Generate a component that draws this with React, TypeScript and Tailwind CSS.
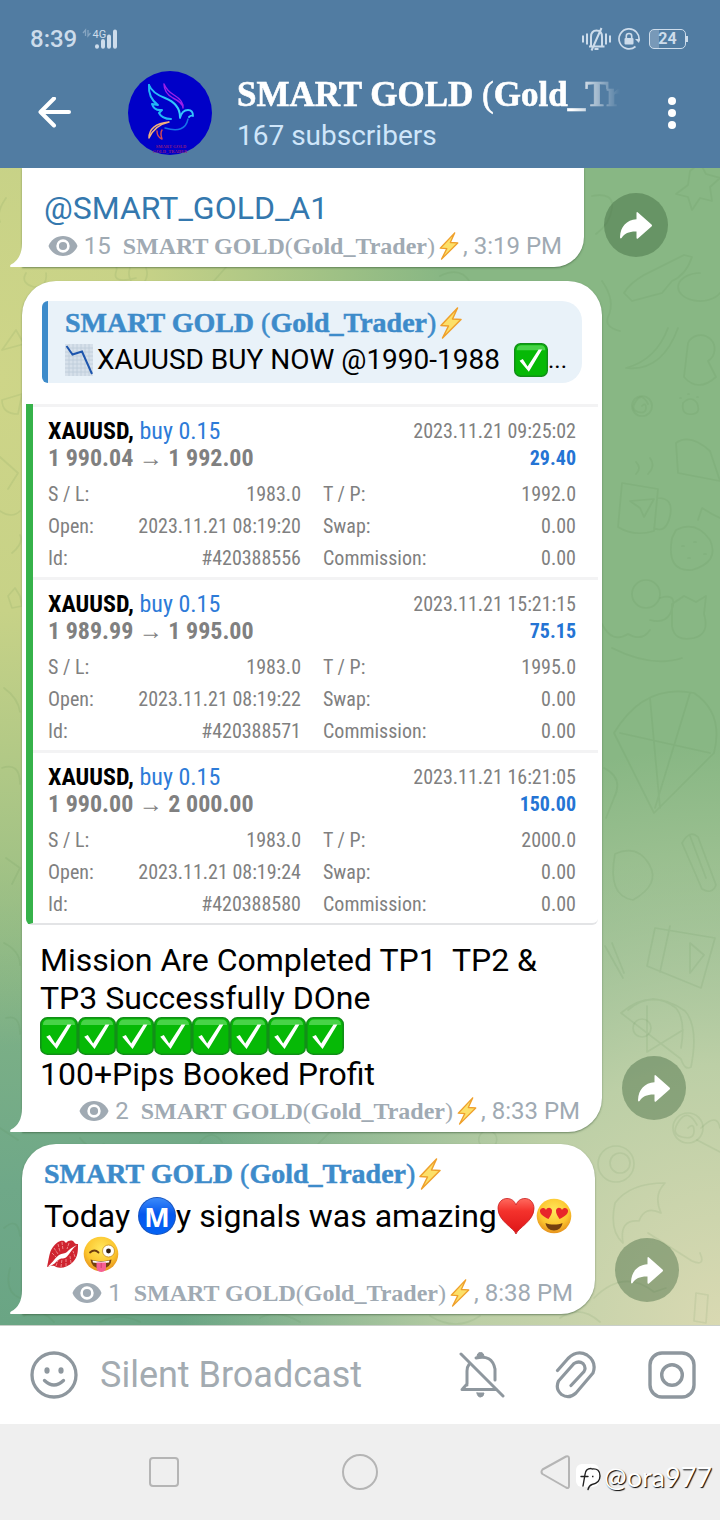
import React from "react";

const SERIF = "font-['Liberation_Serif',serif] font-bold";
const NARROW = "font-['Roboto_Condensed','Liberation_Sans_Narrow','Roboto',sans-serif]";

const trades = [
  { range: "1 990.04 → 1 992.00", closed: "2023.11.21 09:25:02", profit: "29.40", tp: "1992.0", open: "2023.11.21 08:19:20", id: "#420388556" },
  { range: "1 989.99 → 1 995.00", closed: "2023.11.21 15:21:15", profit: "75.15", tp: "1995.0", open: "2023.11.21 08:19:22", id: "#420388571" },
  { range: "1 990.00 → 2 000.00", closed: "2023.11.21 16:21:05", profit: "150.00", tp: "2000.0", open: "2023.11.21 08:19:24", id: "#420388580" },
];

function Bolt({ className }: { className: string }) {
  return (
    <svg viewBox="0 0 22 32" className={className} role="img" aria-label="lightning">
      <path d="M17.500 1 1 18.500l7.500.5L2.500 31 21 12.500l-8.500-.5z" fill="#fce069" stroke="#efa02c" strokeWidth="1.500" strokeLinejoin="round" />
    </svg>
  );
}

function Check({ className }: { className: string }) {
  return (
    <svg viewBox="0 0 38 38" className={className} role="img" aria-label="check mark">
      <rect x="0.8" y="0.8" width="36.4" height="36.4" rx="6.5" fill="#06b906" stroke="#128f18" strokeWidth="1.6" />
      <path d="M3 8q0-5.500 5.500-5.500h21q5.500 0 5.500 5.500z" fill="#5fdc5f" opacity=".75" />
      <path d="M6.200 19.800 9.800 18l5.400 8.400L27.500 7.400h3.900L16.600 32z" fill="#fff" />
    </svg>
  );
}

function Eye() {
  return (
    <svg viewBox="0 0 30 20" className="h-5 w-[30px] shrink-0" aria-hidden="true">
      <path d="M15 0C8.300 0 2.700 4 .5 10 2.700 16 8.300 20 15 20s12.300-4 14.500-10C27.300 4 21.700 0 15 0z" fill="#a0aab3" />
      <circle cx="15" cy="10" r="5.400" fill="none" stroke="#fff" strokeWidth="2.600" />
    </svg>
  );
}

function ChartDown() {
  return (
    <svg viewBox="0 0 28 32" className="h-8 w-7 shrink-0" role="img" aria-label="chart decreasing">
      <rect width="28" height="32" fill="#d6e0ea" />
      <path d="M4 0v32M8 0v32M12 0v32M16 0v32M20 0v32M24 0v32M0 4h28M0 8h28M0 12h28M0 16h28M0 20h28M0 24h28M0 28h28" stroke="#bccbd9" strokeWidth=".8" />
      <path d="M1.500 2 7.500 10.500 17 7.500 27 30" fill="none" stroke="#1d55ad" strokeWidth="2" />
    </svg>
  );
}

function MetroM() {
  return (
    <span className="relative inline-flex h-[38px] w-[38px] items-center justify-center rounded-full bg-[#0a62f0] bg-[linear-gradient(#3f8dfa,#0558ee_45%,#0463f4)] font-['Open_Sans',sans-serif] text-[27px] leading-none font-bold text-white align-middle ring-1 ring-[#1c55b8] ring-inset">
      M
    </span>
  );
}

function Heart() {
  return (
    <svg viewBox="0 0 38 38" className="inline-block h-[38px] w-[38px] align-middle" role="img" aria-label="red heart">
      <defs>
        <linearGradient id="heart" x1="0" y1="0" x2="0" y2="1">
          <stop offset="0" stopColor="#ff6a5e" />
          <stop offset=".35" stopColor="#f4322c" />
          <stop offset="1" stopColor="#dd1417" />
        </linearGradient>
      </defs>
      <path d="M19 37C17 31 1 24 1 11.500 1 5.500 5 1.500 10 1.500c4.500 0 7.500 2.500 9 6.500 1.500-4 4.500-6.500 9-6.500 5 0 9 4 9 10C37 24 21 31 19 37z" fill="url(#heart)" stroke="#c71a1c" strokeWidth=".8" />
    </svg>
  );
}

function FaceBase({ id }: { id: string }) {
  return (
    <>
      <defs>
        <radialGradient id={id} cx=".5" cy=".35" r=".65">
          <stop offset="0" stopColor="#ffe75c" />
          <stop offset=".65" stopColor="#fcc62f" />
          <stop offset="1" stopColor="#e6921d" />
        </radialGradient>
      </defs>
      <circle cx="19" cy="19" r="17.300" fill={`url(#${id})`} />
    </>
  );
}

function HeartEyes() {
  return (
    <svg viewBox="0 0 38 38" className="inline-block h-[38px] w-[38px] align-middle" role="img" aria-label="heart eyes">
      <FaceBase id="face-a" />
      <path d="M13.500 22C9 20 4.500 17 5 13.500c.5-3 4.500-3.500 6-.5 1-3 5.500-3 6 .5.300 3-2 6-3.500 8.500z" fill="#e8262a" />
      <path d="M24.500 22C29 20 33.500 17 33 13.500c-.5-3-4.500-3.500-6-.5-1-3-5.500-3-6 .5-.3 3 2 6 3.500 8.500z" fill="#e8262a" />
      <path d="M10.500 26c4.500 2 12.500 2 17 0-.5 4.500-4 7.500-8.500 7.500S11 30.500 10.500 26z" fill="#74400f" />
    </svg>
  );
}

function Wink() {
  return (
    <svg viewBox="0 0 38 38" className="inline-block h-[38px] w-[38px] align-middle" role="img" aria-label="winking face with tongue">
      <FaceBase id="face-b" />
      <path d="M8 17.500q4.500-4 8.500 0" fill="none" stroke="#6d3d10" strokeWidth="1.800" strokeLinecap="round" />
      <circle cx="26.500" cy="16" r="6" fill="#fff" stroke="#c48a20" strokeWidth=".8" />
      <circle cx="26.500" cy="16" r="2.400" fill="#33200e" />
      <path d="M8.500 24.500q10.500 3.500 21 0-.5 9-10.500 9.300Q9.500 33.500 8.500 24.500z" fill="#74400f" />
      <path d="M10.500 25.500q8.500 2.300 17 0l-.5 2q-8 1.500-16 0z" fill="#fff" />
      <path d="M14.500 27.500h9.500v5c0 6-9.500 6-9.500 0z" fill="#f65f93" />
      <path d="M19.200 28v5" stroke="#d33f72" strokeWidth="1" />
    </svg>
  );
}

function Kiss() {
  return (
    <svg viewBox="0 0 38 38" className="inline-block h-[38px] w-[38px] align-middle" role="img" aria-label="kiss mark">
      <path d="M3 32C5 24 5 17 9 12c3-4 7-7 11-6l2 2c3-3 6-3 8-1 1 2 2 2 4 2 0 7 0 13-5 18-5 5-12 7-17 5-3-2-5-1-9 0z" fill="#cf2430" />
      <path d="M4 31.500c6-1 8-5 11-7s5 0 8-3 5-8 10-11.500c-5 2-8 5-10 7s-5 1-8 3-6 7-11 11.500z" fill="#fff" />
      <path d="M10 13l4 6M14 9l2 8M18 7l1 8M25 8l-2 6M12 31l2-6M17 32l1-8M22 31l0-8M27 28l-1-7M31 22l-2-6M8 18l4 4" stroke="#f3a2a2" strokeWidth=".8" strokeDasharray="3 1" />
    </svg>
  );
}

function Meta({ views, time }: { views: string; time: string }) {
  return (
    <div className="flex h-7 items-center justify-end pr-[22px] text-2xl leading-7 whitespace-pre text-[#a0aab3]">
      <Eye />
      <span className="ml-1.5">{views}</span>
      <span className={`${SERIF} ml-3 text-2xl leading-7`}>
        SMART GOLD<span className="font-normal">(</span>Gold_Trader<span className="font-normal">)</span>
      </span>
      <Bolt className="ml-1 h-7 w-5" />
      <span className="ml-1">, {time}</span>
    </div>
  );
}

function Author() {
  return (
    <div className={`${SERIF} flex items-center text-[28px] leading-8 whitespace-nowrap text-[#3d8bca] [-webkit-text-stroke:0.5px]`}>
      <span>
        SMART GOLD <span className="font-normal">(</span>Gold_Trader<span className="font-normal">)</span>
      </span>
      <Bolt className="ml-1 h-8 w-[22px]" />
    </div>
  );
}

function Message({ className, children, shareClass }: { className: string; children: React.ReactNode; shareClass: string }) {
  return (
    <div className="flex items-end pl-[22px]">
      <article className={`relative bg-white shadow-[0_1px_2px_rgba(50,80,50,0.55)] ${className}`}>
        {children}
        <svg viewBox="0 0 14 34" className="absolute bottom-0 -left-3 h-[34px] w-3.5" aria-hidden="true">
          <path d="M14 34H.5Q-.5 32.500 1 31.500 12 26 12 10V0h2z" fill="#fff" />
        </svg>
      </article>
      <button aria-label="Share" className={`ml-5 flex size-16 shrink-0 items-center justify-center rounded-full bg-[#38603866] ${shareClass}`}>
        <svg viewBox="0 0 32 27" className="h-[27px] w-8" aria-hidden="true">
          <path d="M16.500 1.200Q16.500-.8 18.200.7L31.500 12.500q1 1 0 2L18.200 26.200Q16.500 27.500 16.500 25.500V19.500C9 19.300 4.500 21.500 1.800 25.700.8 27 0 26.500 0 25 .5 14.500 6.500 8 16.500 7.300z" fill="#fff" />
        </svg>
      </button>
    </div>
  );
}

function Trade({ t }: { t: (typeof trades)[number] }) {
  return (
    <section className={`${NARROW} h-[173px] border-t-[3px] border-[#f3f3f4] pt-2.5 pr-[22px] pl-[15px] text-xl text-[#808080]`}>
      <div className="flex items-center justify-between leading-7">
        <h3 className="text-2xl leading-7 font-bold text-black">
          XAUUSD, <span className="font-normal text-[#2d7bd8]">buy 0.15</span>
        </h3>
        <time>{t.closed}</time>
      </div>
      <div className="flex items-center justify-between leading-[26px] font-bold">
        <span className="text-2xl leading-[26px] text-[#808080]">{t.range}</span>
        <span className="text-[#2474d4]">{t.profit}</span>
      </div>
      <table className="mt-[7px] w-full table-fixed">
        <tbody>
          {[
            ["S / L:", "1983.0", "T / P:", t.tp],
            ["Open:", t.open, "Swap:", "0.00"],
            ["Id:", t.id, "Commission:", "0.00"],
          ].map((r) => (
            <tr key={r[0]} className="h-8 leading-8">
              <th className="w-[80px] p-0 text-left font-normal">{r[0]}</th>
              <td className="w-[173px] p-0 text-right">{r[1]}</td>
              <th className="w-[142px] p-0 pl-[22px] text-left font-normal">{r[2]}</th>
              <td className="p-0 text-right">{r[3]}</td>
            </tr>
          ))}
        </tbody>
      </table>
    </section>
  );
}

function Doodles() {
  return (
    <svg viewBox="0 0 720 1157" preserveAspectRatio="xMidYMin slice" className="absolute inset-0 h-full w-full" fill="none" stroke="#4d7b48" strokeOpacity=".1" strokeWidth="1.700" strokeLinecap="round" strokeLinejoin="round" aria-hidden="true">
      <path d="M690 3l10-8 6 11 14 4-10 9 2 14-12-3-8 12-4-13-12-3 12-9zM592 28q22-4 20 12t-16 26M624 125q6-10 20-18l40-20 8 2q-6 18-20 24l-10 12-30 8zM700 105a22 14 0 1 0 20 20" />
      <path d="M602 113q14 20 6 36-4 10 12 14M626 200q30-8 42-40M626 200q36 4 52-40M688 175a14 14 0 1 1 20 18l8 16q-18 16-32 0z" />
      <path d="M622 315l36 6-4 42q-20 6-36-4zM658 330q16 0 12 18t-16 12M630 333l24-2-10 18-4-9zM636 306q6-6 0-12M648 306q8-8 2-16M676 275q14-10 34 8l10 30-42-8z" />
      <path d="M676 362q20-10 34 10 10 22-18 30-26 2-20-32zM698 352l4-12 10 6 8 4M682 378h2M694 374h2M704 386h2M688 390h2" />
      <circle cx="646" cy="426" r="14" />
      <circle cx="642" cy="238" r="10" />
      <path d="M642 238q4-4 4 2t-8 4-2-11 12 3M683 235q8-8 14 0 4 10-4 11-12 2-10-11zM680 230h1M688 226h1M697 229h1" />
      <path d="M660 430q20-6 10 16-6 10-20 6M672 436l12-8 12 6 10-6-2 18q6 20-10 24-20 4-22-12zM602 456q10 20 26 10 14 8 22-4M612 480q40 20 70 10" />
      <path d="M614 565q30-50 80-40 30 20 20 60l-60 60zM620 565l90 20M650 530l10 110M690 525l-35 115M604 600q20 10 10 30l-8 20" />
      <path d="M690 668l16 42M682 675l20 46q10 6 14-4l-18-48q-8-8-16 6M615 686q22-10 34 10t-16 36q-26-4-18-46" />
      <path d="M655 760l60 10-14 50-54-22zM670 758l-10 46M690 775l14 12-14 18zM605 778l18 32M612 775l12 30M701 960q16-16 19 0" />
      <path d="M621 845q30-26 64-2 14 16 6 56-6 4-10-8zM628 842q24-20 48-2 10 12 5 40M647 838v46l36-22" />
      <circle cx="642" cy="860" r="9" />
      <circle cx="616" cy="996" r="18" />
      <circle cx="620" cy="995" r="10" />
      <circle cx="688" cy="960" r="15" />
      <path d="M688 960q6-6 6 3t-12 6-3-16 18 4M697 972l23 12M615 1035q15-20 50-20-12 12-4 30-16-8-22 8-20-2-16 22-14-12-8-40zM648 1065l44 28q14 6 8-8M594 1130q30-30 60-6l12-4M696 1125l12 2-2 28-12-2z" />
      <path d="M6 30q-10 14-6 24M26 105q-6 10 8 14 14 0 12-14M100 98q20-6 16 6t20 6M130 100a9 12 0 1 0 16 0M212 115l16-18M440 108q20-10 30 6M2 182l14-20 8 14zM2 232l20-6-4 20q-16 0-16-14M0 289l18 16-10 16M0 343q12 8 20 0M12 385q12-10 8-18M8 428l7-8 5 8 2 10-10 2zM4 520q14 10 16 24M2 600q18-6 18 16M6 690l14 10-8 16M4 775q16 8 16 22M6 850q14-4 14 16M0 960l18 12M4 1060q14-12 16 8M10 1100q-6 24 10 30M80 970q10 14 24 6M200 974q12-14 22 0M330 964q-10 10-14 14M480 976a9 9 0 1 1 14 2" />
      <path d="M24 1148q16-10 30 6M100 1154q20-10 40 0M260 1150q16-10 40 4M430 1148q26 16 50 0M560 1150q20-14 40 4" />
    </svg>
  );
}

function Dove() {
  return (
    <svg viewBox="0 0 84 84" className="size-[84px]" role="img" aria-label="SMART GOLD logo">
      <defs>
        <linearGradient id="wing" x1="0" y1="0" x2="1" y2="1">
          <stop offset="0" stopColor="#21b4f5" />
          <stop offset="1" stopColor="#3ad0ff" />
        </linearGradient>
      </defs>
      <circle cx="42" cy="42" r="42" fill="#0000c8" />
      <g fill="none" strokeLinecap="round" strokeLinejoin="round">
        <path d="M21 14q-1 13 9 20l-6-1q2 7 10 6l-3 3q3 6 12 6" stroke="#22b8f6" strokeWidth="2" />
        <path d="M21 14q3 8 16 13 15 6 15 19" stroke="url(#wing)" strokeWidth="2" />
        <path d="M36 13q0 9 9 14 10 5 10 10M36 13q3 7 10 11 10 6 9 13" stroke="#9b1fe8" strokeWidth="1.400" />
        <path d="M52 47q2-8 8-8 5 0 5 6-2-1-4 1" stroke="#35c5fb" strokeWidth="1.800" />
        <path d="M37 57q20 6 23-9" stroke="#1672e8" strokeWidth="1.500" />
        <path d="M21 67q0-14 20-16-14 3-20 16" stroke="#f3b07a" strokeWidth="1.500" />
        <path d="M29 60q0 6 5 8-2-6 0-9" stroke="#d54a54" strokeWidth="1.400" />
      </g>
      <text x="43" y="77" textAnchor="middle" fontSize="4.500" fontWeight="700" fontFamily="Liberation Serif, serif" fill="#8b1c80">SMART GOLD</text>
      <text x="42" y="82" textAnchor="middle" fontSize="4.500" fontWeight="700" fontFamily="Liberation Serif, serif" fill="#8b1c80">GOLD_TRADER</text>
    </svg>
  );
}

export default function App() {
  return (
    <div className="flex min-h-screen flex-col bg-white font-['Roboto',sans-serif] text-black">
      <header className="flex h-[168px] flex-col bg-[#517ca2]">
        <div className="flex h-[70px] items-center justify-between pt-[7px] pr-[34px] pl-[30px] text-[#cddceb]">
          <div className="flex items-center">
            <span className="text-2xl leading-7 font-medium">8:39</span>
            <svg viewBox="0 0 36 22" className="ml-1 h-[22px] w-9" role="img" aria-label="4G signal">
              <path d="M2 5l2.500-3v6M7 2v6l2.500-3" stroke="#86a5c1" strokeWidth="1.300" fill="none" />
              <text x="11.500" y="9.500" fontSize="11" fontFamily="Roboto, sans-serif" fill="currentColor">4G</text>
              <path d="M16 18.200v.5M22 13v5.700M28 8.500v10.200M34 3.500v15.200" stroke="currentColor" strokeWidth="4" strokeLinecap="round" />
            </svg>
          </div>
          <div className="flex items-center">
            <svg viewBox="0 0 29 24" className="h-6 w-[29px]" fill="none" stroke="currentColor" strokeWidth="2" aria-label="Silent">
              <path d="M1 8.500v7M5 6.500v11M28 8.500v7M24 6.500v11M7 19.500h15.500M9 19V10q0-6.500 5.500-6.500T20 10v9M12.500 22h4M9.500 23.500L19.500 1" />
            </svg>
            <svg viewBox="0 0 22 22" className="ml-[7px] size-[22px]" aria-label="Rotation locked">
              <path d="M17.500 18.500A10 10 0 1 1 20.800 13" fill="none" stroke="currentColor" strokeWidth="1.700" />
              <path d="M17 11h5l-1 4z" fill="currentColor" />
              <rect x="6.500" y="10" width="9" height="6.500" rx="1" fill="currentColor" />
              <path d="M8.300 10V8q0-2.500 2.700-2.500T13.700 8v2" fill="none" stroke="currentColor" strokeWidth="1.600" />
            </svg>
            <div className="relative ml-[9px] flex h-5 w-[37px] items-center justify-center rounded-[5px] border border-current bg-[linear-gradient(90deg,#7899b8_9px,transparent_9px)] text-base font-bold">
              24
              <span className="absolute top-1.5 -right-[3px] h-1.5 w-[2px] bg-[#cddceb]" />
            </div>
          </div>
        </div>
        <div className="flex h-[86px] items-center pr-7 pl-9 text-white">
          <button aria-label="Back">
            <svg viewBox="0 0 36 32" className="h-8 w-9" fill="none" stroke="currentColor" strokeWidth="4" strokeLinecap="round" strokeLinejoin="round">
              <path d="M33 15H5M18 1.500L4.500 15 18 28.500" />
            </svg>
          </button>
          <div className="ml-14 shrink-0">
            <Dove />
          </div>
          <div className="ml-[25px] min-w-0 flex-1 pt-[3px]">
            <h1 className={`${SERIF} overflow-hidden text-[35px] leading-[42px] whitespace-nowrap [-webkit-text-stroke:0.6px] [mask-image:linear-gradient(90deg,#000_calc(100%-48px),transparent)]`}>
              SMART GOLD <span className="font-normal">(</span>Gold_Trader)
            </h1>
            <p className="text-[28px] leading-10 text-[#cfe6fa]">167 subscribers</p>
          </div>
          <button aria-label="More options" className="ml-8 flex w-10 flex-col items-center gap-1">
            <span className="size-2 rounded-full bg-white" />
            <span className="size-2 rounded-full bg-white" />
            <span className="size-2 rounded-full bg-white" />
          </button>
        </div>
      </header>

      <main className="relative flex-1 overflow-hidden bg-[#88b784] bg-[radial-gradient(ellipse_62%_58%_at_0%_18%,#ced588_0%,#c7d287_35%,transparent_100%),radial-gradient(ellipse_75%_50%_at_100%_100%,#d9d9b2_0%,#bccfa6_45%,transparent_100%),linear-gradient(#88b784_0%,#88b784_60%,#6fa888_88%,#6aa584_100%)]">
        <Doodles />
        <div className="relative flex flex-col pb-[11px]">
          <Message className="w-[562px] rounded-br-[30px]" shareClass="mb-2.5">
            <div className="pt-[18px] pb-0.5 pl-[22px]">
              <a href="#channel" className="block text-[32px] leading-[44px] text-[#3478ae]">@SMART_GOLD_A1</a>
            </div>
            <div className="pb-[7px]">
              <Meta views="15" time="3:19 PM" />
            </div>
          </Message>

          <div className="mt-3.5">
            <Message className="w-[580px] rounded-t-[34px] rounded-br-[34px]" shareClass="mb-3">
              <div className="px-5 pt-5">
                <blockquote className="overflow-hidden rounded-l-[6px] rounded-r-[20px] border-l-[6px] border-[#3d8bca] bg-[#e9f2f9] pt-1.5 pb-1 pl-[17px]">
                  <Author />
                  <div className="flex h-10 items-center pt-0.5 text-[28px] leading-8 whitespace-pre">
                    <ChartDown />
                    <span className="ml-1">XAUUSD BUY NOW @1990-1988</span>
                    <Check className="ml-3.5 size-[34px]" />
                    <span className="text-2xl">...</span>
                  </div>
                </blockquote>
              </div>
              <div className="mx-1 mt-[21px] overflow-hidden rounded-b-[6px] border-b-2 border-l-[7px] border-b-[#e3e4e6] border-l-[#36b24a]">
                {trades.map((t) => (
                  <Trade key={t.id} t={t} />
                ))}
              </div>
              <div className="mt-4 pr-4 pl-[18px] text-[32px] leading-[38px]">
                <p className="whitespace-pre">{"Mission Are Completed TP1  TP2 &"}</p>
                <p>TP3 Successfully DOne</p>
                <div className="flex">
                  {Array.from({ length: 8 }, (_, i) => (
                    <Check key={i} className="size-[38px]" />
                  ))}
                </div>
                <p>100+Pips Booked Profit</p>
              </div>
              <div className="pt-1 pb-[7px]">
                <Meta views="2" time="8:33 PM" />
              </div>
            </Message>
          </div>

          <div className="mt-3">
            <Message className="w-[573px] rounded-t-[34px] rounded-br-[34px]" shareClass="mb-3">
              <div className="pt-3.5 pl-[22px]">
                <Author />
                <p className="mt-[7px] flex h-[38px] items-center text-[32px] leading-[38px] whitespace-pre">
                  {"Today "}
                  <MetroM />
                  {"y signals was amazing"}
                  <Heart />
                  <HeartEyes />
                </p>
                <p className="flex h-[38px] items-center">
                  <Kiss />
                  <Wink />
                </p>
              </div>
              <div className="pt-1.5 pb-[7px]">
                <Meta views="1" time="8:38 PM" />
              </div>
            </Message>
          </div>
        </div>
      </main>

      <form className="flex h-[99px] items-center border-t border-[#c9cfc9] bg-white pr-6 pl-[30px] text-[#8e979e]" onSubmit={(e) => e.preventDefault()}>
        <button type="button" aria-label="Emoji" className="shrink-0">
          <svg viewBox="0 0 48 48" className="size-12" fill="none" stroke="currentColor" strokeWidth="3.300" strokeLinecap="round">
            <circle cx="24" cy="24" r="22" />
            <path d="M14.500 29.500q9.500 9 19 0" />
            <ellipse cx="17" cy="19.500" rx="2.600" ry="3.200" fill="currentColor" stroke="none" />
            <ellipse cx="31" cy="19.500" rx="2.600" ry="3.200" fill="currentColor" stroke="none" />
          </svg>
        </button>
        <input aria-label="Silent Broadcast" placeholder="Silent Broadcast" className="ml-[22px] min-w-0 flex-1 text-[36px] leading-10 outline-none placeholder:text-[#a3abb1]" />
        <button type="button" aria-label="Mute notifications" className="ml-4 shrink-0">
          <svg viewBox="0 0 46 48" className="h-12 w-[46px]" fill="none" stroke="currentColor" strokeWidth="3" strokeLinecap="round">
            <path d="M2 3L44 45" />
            <path d="M3 38.500h34M8 34V20q0-4 2-6.500M17 7q16-4 19 11v11M8 33l-4.500 5" />
            <path d="M18 6q0-4.500 3.500-4.500T25 6M18 42h7q-.5 4-3.500 4T18 42z" fill="currentColor" strokeWidth="1" />
          </svg>
        </button>
        <button type="button" aria-label="Attach" className="ml-[50px] shrink-0">
          <svg viewBox="0 0 42 48" className="h-12 w-[42px]" fill="none" stroke="currentColor" strokeWidth="3.200" strokeLinecap="round">
            <path d="M2.500 19.500L13 7.500q9-9 19-3.500 10 7 6 18L21 42q-7 6.500-14.500 1.500Q0 38 3.500 30L19 12.500q5-3 9 0 3.500 4 1 8L16 34.500" />
          </svg>
        </button>
        <button type="button" aria-label="Record video" className="ml-[51px] shrink-0">
          <svg viewBox="0 0 48 48" className="size-12" fill="none" stroke="currentColor" strokeWidth="3.400">
            <rect x="2" y="2" width="44" height="44" rx="12" />
            <circle cx="24" cy="24" r="10.300" />
          </svg>
        </button>
      </form>

      <nav className="relative flex h-24 items-center justify-between bg-[#efefef] px-[148px] text-[#b5b5b5]">
        <button aria-label="Recent apps">
          <svg viewBox="0 0 32 32" className="size-8" fill="none" stroke="currentColor" strokeWidth="2">
            <rect x="2" y="2" width="28" height="28" rx="3" />
          </svg>
        </button>
        <button aria-label="Home">
          <svg viewBox="0 0 38 38" className="size-[38px]" fill="none" stroke="currentColor" strokeWidth="2">
            <circle cx="19" cy="19" r="17" />
          </svg>
        </button>
        <button aria-label="Back">
          <svg viewBox="0 0 32 36" className="h-9 w-8" fill="none" stroke="currentColor" strokeWidth="2" strokeLinejoin="round">
            <path d="M2.500 15.500Q.5 18 2.500 20L26 33.500q3 1.500 3-1.500V4.500q0-3-3-2z" />
          </svg>
        </button>
        <div className="absolute top-[37px] right-2 flex items-center text-white">
          <svg viewBox="0 0 28 30" className="h-[30px] w-7" aria-hidden="true">
            <rect x="0" y="2" width="23" height="23" rx="6" fill="#fff" />
            <path d="M15 6.500q-5.500 0-6 6L7 24M5 14.500h7M16 7q8-1 8 7 0 7-8 8.500-3 1-4 5" fill="none" stroke="#222" strokeWidth="1.400" strokeLinecap="round" />
            <path d="M16 14.500h1.500" stroke="#222" strokeWidth="1.400" />
          </svg>
          <span className="font-['Lato',sans-serif] text-[27px] leading-8 [text-shadow:1px_1px_1px_#000]">@ora977</span>
        </div>
      </nav>
    </div>
  );
}
